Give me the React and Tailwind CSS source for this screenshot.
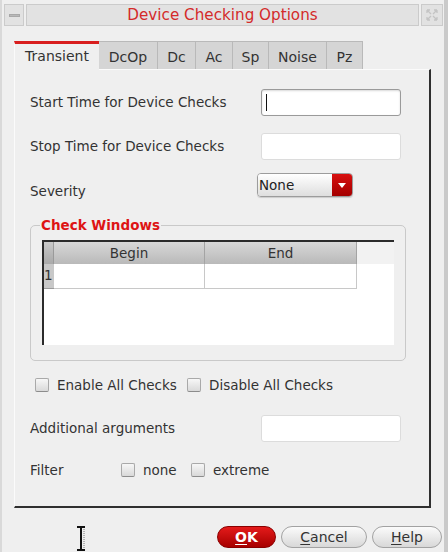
import { useState } from "react";

const tabs = [
  { name: "Transient", w: "w-[85px]" },
  { name: "DcOp", w: "w-[59px]" },
  { name: "Dc", w: "w-[38px]" },
  { name: "Ac", w: "w-[37px]" },
  { name: "Sp", w: "w-[36px]" },
  { name: "Noise", w: "w-[58px]" },
  { name: "Pz", w: "w-[36px]" },
];

const Checkbox = () => (
  <span className="block w-[14px] h-[14px] shrink-0 rounded-[2px] border border-[#a9a9a9] border-b-[#8c8c8c] bg-gradient-to-b from-[#f7f7f7] to-[#d9d9d9]" />
);

const TextField = ({ strong, cursor }) => (
  <div
    className={`w-[140px] h-[27px] bg-white rounded-[3px] border flex items-center pl-[4px] ${
      strong ? "border-[#9a9a9a] shadow-[inset_0_1px_2px_rgba(0,0,0,0.15)]" : "border-[#dcdcdc]"
    }`}
  >
    {cursor && <span className="block w-[1px] h-[17px] bg-[#111]" />}
  </div>
);

const Button = ({ children, red, w }) => (
  <button
    className={`${w} h-[22px] rounded-full border text-[14px] leading-none flex items-center justify-center ${
      red
        ? "border-[#8a0000] bg-gradient-to-b from-[#e41a1a] to-[#a80000] text-white font-bold"
        : "border-[#a2a2a2] bg-gradient-to-b from-[#fbfbfb] to-[#d8d8d8] text-[#333]"
    }`}
  >
    {children}
  </button>
);

export default function App() {
  const [active] = useState("Transient");

  return (
    <div className="relative w-[448px] h-[552px] overflow-hidden bg-[#efefef] border-l-[2px] border-r-[4px] border-l-[#d9d9d9] border-r-[#cacaca] font-['DejaVu_Sans',sans-serif] text-[13.5px] text-[#333]">
      {/* title bar */}
      <div className="flex gap-[2px] pl-[2px] pr-[1px] pt-[4px] h-[26px]">
        <div className="w-[20px] h-[22px] bg-[#e2e2e2] border border-[#cbcbcb] flex items-center justify-center">
          <span className="block w-[11px] h-[3px] bg-[#b8b8b8] border border-[#a8a8a8]" />
        </div>
        <div className="flex-1 h-[22px] bg-[#e2e2e2] border border-[#cbcbcb] flex items-center justify-center text-[15.2px] text-[#d42a2a]">
          Device Checking Options
        </div>
        <div className="w-[22px] h-[22px] bg-[#e2e2e2] border border-[#cbcbcb] flex items-center justify-center">
          <svg width="14" height="14" viewBox="0 0 14 14" fill="none" stroke="#c4c4c4" strokeWidth="1.3">
            <path d="M2 2l4 4M12 2L8 6M2 12l4-4M12 12L8 8M2 2h3M2 2v3M12 2H9M12 2v3M2 12h3M2 12V9M12 12H9M12 12V9" />
          </svg>
        </div>
      </div>

      {/* tabs */}
      <div className="flex ml-[12px] mt-[15px] h-[28px]">
        {tabs.map((t) =>
          t.name === active ? (
            <div
              key={t.name}
              className={`${t.w} h-[29px] -mb-px z-10 bg-[#efefef] border-t-[3px] border-t-[#d81e1e] border-l border-l-[#fafafa] flex items-center justify-center text-[14px] text-[#333] pb-[2px]`}
            >
              {t.name}
            </div>
          ) : (
            <div
              key={t.name}
              className={`${t.w} h-[28px] bg-[#d5d5d5] border-t border-r border-[#b9b9b9] flex items-center justify-center text-[14px] text-[#333] pt-[3px]`}
            >
              {t.name}
            </div>
          )
        )}
      </div>

      {/* panel */}
      <div className="ml-[12px] w-[417px] h-[439px] border-t border-l border-t-[#fbfbfb] border-l-[#fbfbfb] border-r-2 border-b-2 border-r-[#2f2f2f] border-b-[#2f2f2f] pl-[15px] pt-px">
        <div className="flex items-center h-[27px] mt-[18px]">
          <span className="w-[231px]">Start Time for Device Checks</span>
          <TextField strong cursor />
        </div>
        <div className="flex items-center h-[27px] mt-[17px]">
          <span className="w-[231px]">Stop Time for Device Checks</span>
          <TextField />
        </div>
        <div className="flex items-start h-[24px] mt-[13px]">
          <span className="w-[227px] mt-[10px] leading-[16px]">Severity</span>
          <div className="flex w-[96px] h-[24px] rounded-[4px] border border-[#9c9c9c] overflow-hidden shadow-[0_1px_1px_rgba(0,0,0,0.15)]">
            <span className="flex-1 pl-[1px] flex items-center bg-gradient-to-b from-[#ffffff] to-[#dedede] text-[#222]">
              None
            </span>
            <span className="w-[20px] flex items-center justify-center bg-gradient-to-b from-[#d81010] to-[#a40000]">
              <svg width="8" height="5" viewBox="0 0 8 5">
                <path d="M0 0h8L4 5z" fill="#fff" />
              </svg>
            </span>
          </div>
        </div>

        {/* check windows group */}
        <div className="relative w-[376px] h-[136px] mt-[28px] rounded-[5px] border border-[#c9c9c9] pl-[11px] pt-[14px]">
          <span className="absolute -top-[10px] left-[9px] px-[1px] bg-[#efefef] text-[#de1414] font-bold leading-[18px]">
            Check Windows
          </span>
          <div className="w-[352px] h-[105px] bg-white border-t-2 border-l-2 border-[#2b2b2b] flex flex-col">
            <div className="flex h-[22px]">
              <span className="w-[10px] bg-gradient-to-b from-[#c9c9c9] to-[#a9a9a9] border-r border-[#9a9a9a]" />
              <span className="w-[151px] flex items-center justify-center bg-gradient-to-b from-[#d8d8d8] to-[#b9b9b9] border-r border-[#a4a4a4]">
                Begin
              </span>
              <span className="w-[152px] flex items-center justify-center bg-gradient-to-b from-[#d8d8d8] to-[#b9b9b9] border-r border-[#a4a4a4]">
                End
              </span>
              <span className="flex-1 bg-[#f2f2f2]" />
            </div>
            <div className="flex h-[25px]">
              <span className="w-[10px] bg-[#c8c8c8] border-b border-[#9a9a9a] flex items-center text-[#333] leading-none">
                1
              </span>
              <span className="w-[151px] border-r border-b border-[#c8c8c8]" />
              <span className="w-[152px] border-r border-b border-[#c8c8c8]" />
            </div>
          </div>
        </div>

        <div className="flex items-center h-[14px] mt-[17px] pl-[5px]">
          <div className="w-[152px] flex items-center gap-[8px]">
            <Checkbox />
            <span>Enable All Checks</span>
          </div>
          <div className="flex items-center gap-[8px]">
            <Checkbox />
            <span>Disable All Checks</span>
          </div>
        </div>

        <div className="flex items-center h-[27px] mt-[23px]">
          <span className="w-[231px]">Additional arguments</span>
          <TextField />
        </div>

        <div className="flex items-center h-[16px] mt-[20px]">
          <span className="w-[91px]">Filter</span>
          <div className="w-[70px] flex items-center gap-[8px]">
            <Checkbox />
            <span>none</span>
          </div>
          <div className="flex items-center gap-[8px]">
            <Checkbox />
            <span>extreme</span>
          </div>
        </div>
      </div>

      {/* buttons */}
      <div className="flex justify-end mt-[18px] pr-[2px] gap-[5px]">
        <Button red w="w-[59px]">
          <span className="underline underline-offset-2">O</span>K
        </Button>
        <Button w="w-[86px]">
          <span className="underline underline-offset-2">C</span>ancel
        </Button>
        <Button w="w-[70px]">
          <span className="underline underline-offset-2">H</span>elp
        </Button>
      </div>

      {/* mouse cursor */}
      <svg className="absolute left-[74px] top-[526px]" width="12" height="26" viewBox="0 0 12 26">
        <path d="M1 1h8M5 1v23M1 24h8" stroke="#111" strokeWidth="2" fill="none" />
        <path d="M8 3v19" stroke="#777" strokeWidth="1" strokeDasharray="1 1" fill="none" />
      </svg>
    </div>
  );
}
